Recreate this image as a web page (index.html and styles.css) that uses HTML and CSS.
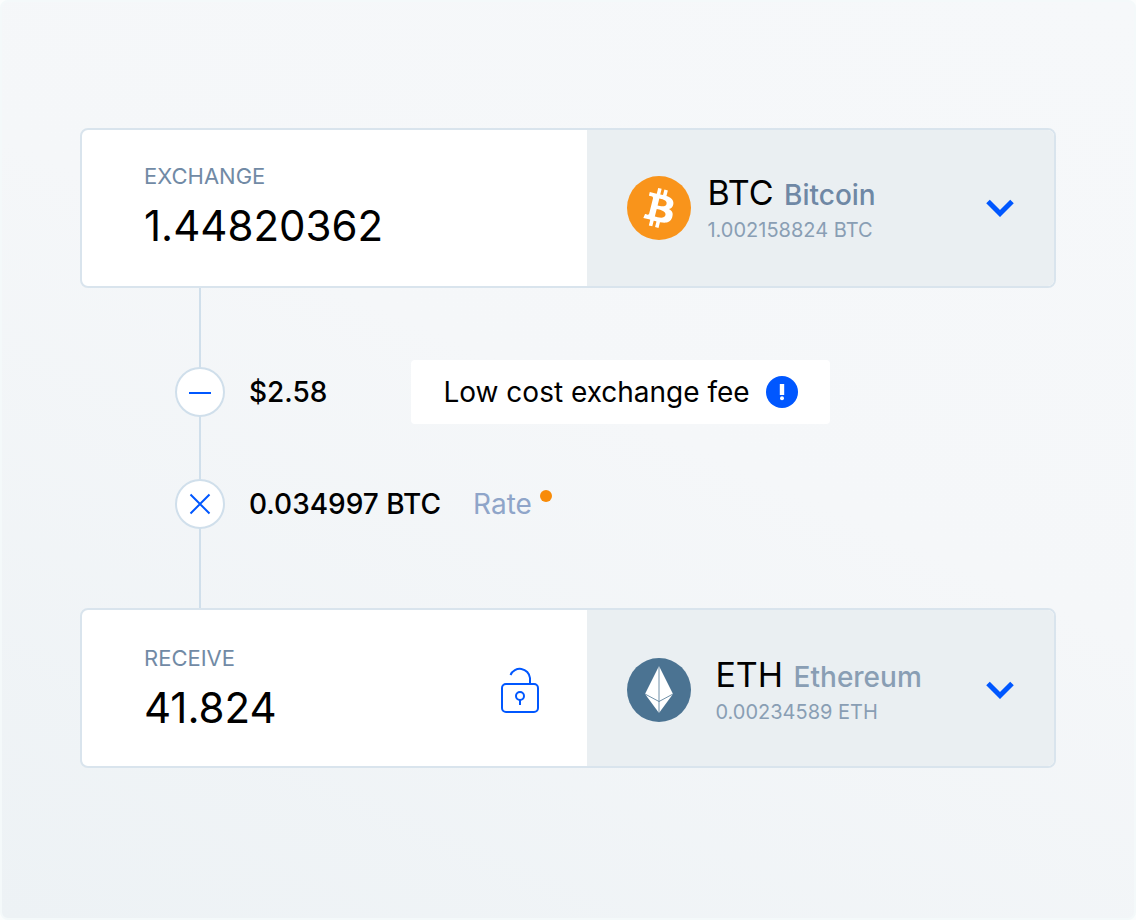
FILE: index.html
```
<!DOCTYPE html>
<html lang="en">
<head>
    <meta charset="utf-8">
    <meta name="viewport" content="width=device-width, initial-scale=1">
    <title>Exchange</title>
    <link rel="stylesheet" href="styles.css">
</head>
<body>
<form class="exchange">
    <div class="card">
        <div class="amount">
            <div class="field">
                <label for="send">EXCHANGE</label>
                <input id="send" type="text" inputmode="decimal" value="1.44820362">
            </div>
        </div>
        <button class="coin" type="button" aria-haspopup="listbox">
            <svg class="logo" viewBox="0 0 32 32">
                <circle cx="16" cy="16" r="16" fill="#f9941b"/>
                <path fill="#fff" d="M23.189 14.02c.314-2.096-1.283-3.223-3.465-3.975l.708-2.84-1.728-.43-.69 2.765c-.454-.114-.92-.22-1.385-.326l.695-2.783L15.596 6l-.708 2.839c-.376-.086-.746-.17-1.104-.26l.002-.009-2.384-.595-.46 1.846s1.283.294 1.256.312c.7.175.826.638.805 1.006l-.806 3.235c.048.012.11.03.18.057l-.183-.045-1.13 4.532c-.086.212-.303.531-.793.41.018.025-1.256-.313-1.256-.313l-.858 1.978 2.25.561c.418.105.828.215 1.231.318l-.715 2.872 1.727.43.708-2.84c.472.127.93.245 1.378.357l-.706 2.828 1.728.43.715-2.866c2.948.558 5.164.333 6.097-2.333.752-2.146-.037-3.385-1.588-4.192 1.13-.26 1.98-1.003 2.207-2.538zm-3.95 5.538c-.533 2.147-4.148.986-5.32.695l.95-3.805c1.172.293 4.929.872 4.37 3.11zm.535-5.569c-.487 1.953-3.495.96-4.47.717l.86-3.45c.975.243 4.118.696 3.61 2.733z"/>
            </svg>
            <span class="coin-text">
                <span class="coin-title"><span class="code">BTC</span> <span class="name">Bitcoin</span></span>
                <span class="balance">1.002158824 BTC</span>
            </span>
            <svg class="chevron" viewBox="0 0 28 18">
                <path d="M2 2.500L14 14.500L26 2.500"/>
            </svg>
        </button>
    </div>

    <ul class="steps">
        <li>
            <span class="sign">
                <svg viewBox="0 0 22 22"><path d="M0 12H22"/></svg>
            </span>
            <span class="value">$2.58</span>
            <span class="note">
                Low cost exchange fee
                <svg viewBox="0 0 32 32">
                    <circle cx="16" cy="16" r="16" fill="#0057ff"/>
                    <path fill="#fff" d="M13.800 8h4.400v11h-4.400z"/>
                    <circle cx="16" cy="22.200" r="2" fill="#fff"/>
                </svg>
            </span>
        </li>
        <li>
            <span class="sign">
                <svg viewBox="0 0 22 22"><path d="M1.500 1.500L20.500 20.500M20.500 1.500L1.500 20.500"/></svg>
            </span>
            <span class="value">0.034997 BTC</span>
            <span class="rate">Rate</span>
        </li>
    </ul>

    <div class="card receive">
        <div class="amount">
            <div class="field">
                <label for="receive">RECEIVE</label>
                <input id="receive" type="text" inputmode="decimal" value="41.824">
            </div>
            <button class="lock" type="button" aria-label="Lock amount">
                <svg viewBox="0 0 38 46">
                    <rect x="1" y="17" width="36" height="28" rx="4"/>
                    <path d="M9.500 8A10.200 10.200 0 0 1 29 11V17"/>
                    <circle cx="19" cy="29" r="4"/>
                    <path d="M19 33V38"/>
                </svg>
            </button>
        </div>
        <button class="coin" type="button" aria-haspopup="listbox">
            <svg class="logo" viewBox="0 0 64 64">
                <circle cx="32" cy="32" r="32" fill="#4b7392"/>
                <path fill="#fff" d="M32 8L46 36L32 55L18 36z"/>
                <path fill="none" stroke="#4b7392" stroke-width=".8" d="M32 8V55M18 36L32 43.500L46 36"/>
            </svg>
            <span class="coin-text">
                <span class="coin-title"><span class="code">ETH</span> <span class="name">Ethereum</span></span>
                <span class="balance">0.00234589 ETH</span>
            </span>
            <svg class="chevron" viewBox="0 0 28 18">
                <path d="M2 2.500L14 14.500L26 2.500"/>
            </svg>
        </button>
    </div>
</form>
</body>
</html>
```

FILE: styles.css
```
* {
    box-sizing: border-box;
}

body {
    margin: 0;
    background: #fbfdfd;
    color: #000;
    font-family: Inter, "Liberation Sans", sans-serif;
}

button, input {
    margin: 0;
    padding: 0;
    border: none;
    background: none;
    color: inherit;
    font: inherit;
}

button {
    cursor: pointer;
}

svg {
    display: block;
    flex: none;
}

.exchange {
    min-height: 100vh;
    padding: 126px 78px;
    border: 2px solid #f4f9fa;
    border-radius: 8px;
    background: linear-gradient(24deg, #edf2f5, #f5f7f9 55%, #f6f8fa);
}

.card {
    display: grid;
    grid-template-columns: 52fr 48fr;
    min-height: 160px;
    border: 2px solid #d9e4ed;
    border-radius: 8px;
    background: #fff;
    overflow: hidden;
}

.amount {
    display: flex;
    align-items: center;
    padding: 0 48px 0 62px;
}

.field {
    flex: 1;
    min-width: 0;
}

.field label {
    display: block;
    color: #718aa5;
    font-size: 22px;
    line-height: 28px;
}

.field input {
    display: block;
    width: 100%;
    height: 58px;
    margin-top: 6px;
    font-size: 42px;
    line-height: 54px;
    outline: none;
}

.lock svg {
    width: 38px;
    height: 46px;
    fill: none;
    stroke: #0057ff;
    stroke-width: 2;
}

.coin {
    display: flex;
    align-items: center;
    gap: 16px;
    padding: 0 40px;
    background: #eaeff2;
    text-align: left;
}

.receive .amount,
.receive .coin {
    padding-top: 4px;
}

.receive .coin {
    gap: 24px;
}

.logo {
    width: 64px;
    height: 64px;
}

.coin-text {
    flex: 1;
    white-space: nowrap;
}

.coin-title {
    display: block;
    line-height: 38px;
}

.code {
    font-size: 34px;
}

.name {
    margin-left: 6px;
    color: #6f88a5;
    font-size: 28px;
    font-weight: 500;
}

.receive .name {
    color: #899eb4;
}

.balance {
    display: block;
    color: #899eb4;
    font-size: 20px;
    line-height: 24px;
}

.chevron {
    width: 28px;
    height: 18px;
    fill: none;
    stroke: #0057ff;
    stroke-width: 5;
}

/* the vertical line runs behind the round signs */
.steps {
    display: flex;
    flex-direction: column;
    gap: 48px;
    margin: 0;
    padding: 72px 0 72px 95px;
    background: linear-gradient(#d0dfeb, #d0dfeb) 119px 0 / 2px 100% no-repeat;
    list-style: none;
    font-size: 28px;
}

.steps li {
    display: flex;
    align-items: center;
    min-height: 64px;
}

.sign {
    display: flex;
    align-items: center;
    justify-content: center;
    width: 50px;
    height: 50px;
    margin-right: 24px;
    border: 2px solid #d0dfeb;
    border-radius: 50%;
    background: #fff;
}

.sign svg {
    width: 22px;
    height: 22px;
    stroke: #0057ff;
    stroke-width: 2;
}

.value {
    font-weight: 500;
}

.note {
    display: flex;
    align-items: center;
    gap: 16px;
    height: 64px;
    margin-left: 84px;
    padding: 0 32px;
    border-radius: 4px;
    background: #fff;
}

.note svg {
    width: 32px;
    height: 32px;
}

.rate {
    margin-left: 32px;
    color: #8fa5c9;
}

.rate::after {
    content: "";
    display: inline-block;
    width: 12px;
    height: 12px;
    margin-left: 8px;
    border-radius: 50%;
    background: #f88b08;
    vertical-align: 12px;
}
```
